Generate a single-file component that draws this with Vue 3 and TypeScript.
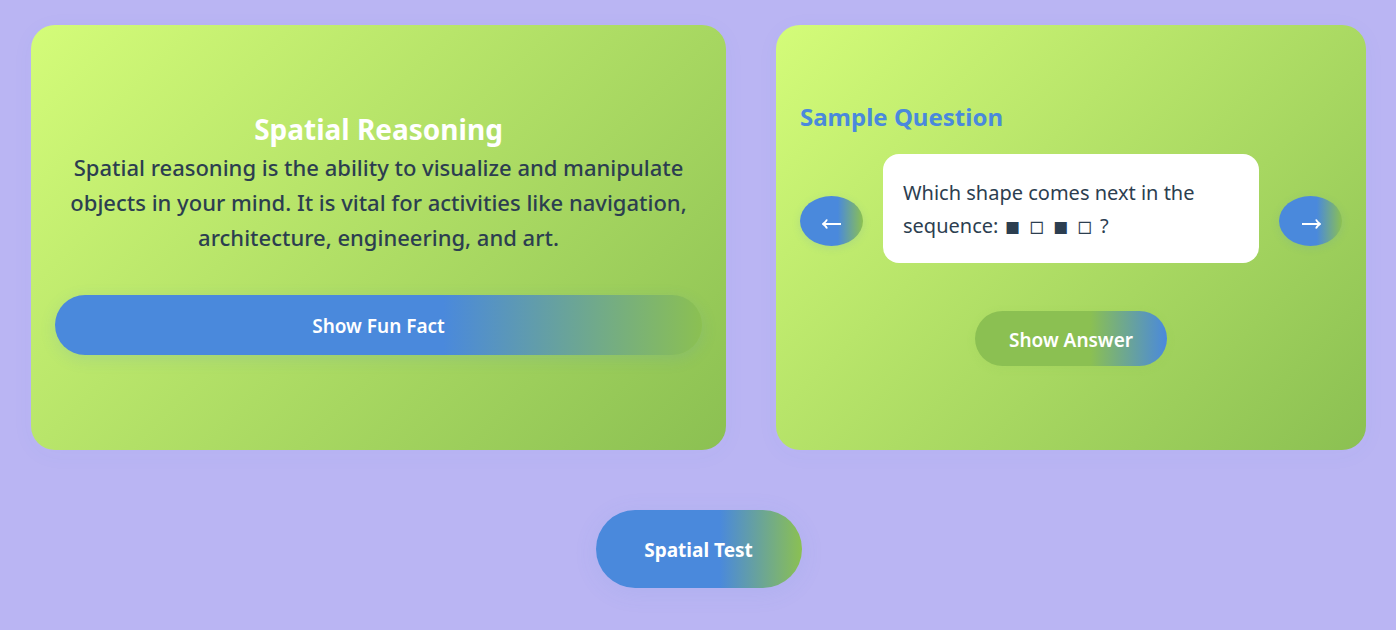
<script setup lang="ts">
import { computed, ref } from 'vue'

const questions = [
  { text: 'Which shape comes next in the sequence:', shapes: '■ □ ■ □', answer: '■' },
]
const index = ref(0)
const showFact = ref(false)
const showAnswer = ref(false)
const current = computed(() => questions[index.value])

function move(step: number) {
  index.value = (index.value + step + questions.length) % questions.length
  showAnswer.value = false
}
</script>

<template>
  <main class="page">
    <div class="cards">
      <section class="card intro">
        <h1>Spatial Reasoning</h1>
        <p class="lead">
          Spatial reasoning is the ability to visualize and manipulate objects in your mind. It is
          vital for activities like navigation, architecture, engineering, and art.
        </p>
        <button class="btn fact" type="button" @click="showFact = !showFact">Show Fun Fact</button>
      </section>
      <section class="card sample">
        <h2>Sample Question</h2>
        <div class="carousel">
          <button class="btn arrow" type="button" aria-label="Previous question" @click="move(-1)">
            <svg viewBox="0 0 20 12" aria-hidden="true"><path d="M19 6H1.500M5 1.500Q4 4 1 6Q4 8 5 10.500" /></svg>
          </button>
          <p class="question">
            {{ current.text }} <span class="shapes">{{ current.shapes }}</span> ?
          </p>
          <button class="btn arrow" type="button" aria-label="Next question" @click="move(1)">
            <svg viewBox="0 0 20 12" aria-hidden="true"><path d="M1 6h17.500M15 1.500Q16 4 19 6Q16 8 15 10.500" /></svg>
          </button>
        </div>
        <button class="btn answer" type="button" @click="showAnswer = !showAnswer">
          Show Answer
        </button>
      </section>
    </div>
    <button class="btn test" type="button">Spatial Test</button>
  </main>
</template>

<style>
body {
  margin: 0;
  background: #bab5f3;
}
</style>

<style scoped>
.page {
  box-sizing: border-box;
  display: flex;
  flex-direction: column;
  align-items: center;
  gap: 60px;
  padding: 25px 30px 42px 31px;
  font-family: 'Noto Sans', 'Open Sans', 'DejaVu Sans', sans-serif;
  color: #2c3e50;
}
.cards {
  display: grid;
  grid-template-columns: 695fr 590fr;
  gap: 50px;
  width: 100%;
}
.card {
  box-sizing: border-box;
  display: flex;
  flex-direction: column;
  justify-content: center;
  min-height: 425px;
  padding: 24px;
  border-radius: 24px;
  background: linear-gradient(135deg, #d4fc79 0%, #8bc052 100%);
  box-shadow: 0 4px 24px rgba(74, 137, 220, 0.04);
}
.intro {
  text-align: center;
}
h1 {
  margin: 0 0 2px;
  font-size: 28px;
  line-height: 38px;
  font-weight: 700;
  color: #fff;
}
.lead {
  margin: 0 0 40px;
  font-size: 22px;
  line-height: 35px;
  font-weight: 500;
}
.btn {
  border: 0;
  padding: 2px 0 0;
  font-family: inherit;
  color: #fff;
  cursor: pointer;
  background: linear-gradient(90deg, #4a89dc 60%, #8bc052 100%);
  box-shadow: 0 4px 16px rgba(74, 137, 220, 0.15);
}
.fact {
  height: 60px;
  margin-bottom: 10px;
  border-radius: 30px;
  font-size: 19px;
  font-weight: 600;
}
h2 {
  margin: 0 0 20px;
  font-size: 24px;
  line-height: 34px;
  font-weight: 700;
  color: #4a89dc;
}
.carousel {
  display: flex;
  align-items: center;
  gap: 20px;
  margin-bottom: 48px;
}
.arrow {
  display: grid;
  place-items: center;
  flex: none;
  width: 63px;
  height: 50px;
  margin-top: 25px;
  padding-top: 6px;
  border-radius: 50%;
  box-shadow: 0 2px 8px rgba(74, 137, 220, 0.15);
}
.arrow svg {
  width: 20px;
  height: 12px;
  fill: none;
  stroke: currentColor;
  stroke-width: 1.9;
}
.question {
  flex: 1;
  margin: 0;
  padding: 22px 20px 21px;
  border-radius: 16px;
  background: #fff;
  font-size: 20px;
  line-height: 33px;
}
.shapes {
  margin: 0 4px 0 3px;
  font-family: 'DejaVu Sans Mono', monospace;
  font-size: 20px;
  line-height: 1;
}
.answer {
  align-self: center;
  width: 192px;
  height: 55px;
  margin-bottom: 9px;
  border-radius: 28px;
  font-size: 19px;
  font-weight: 600;
  background: linear-gradient(90deg, #8bc052 60%, #4a89dc 100%);
  box-shadow: 0 2px 8px rgba(139, 192, 82, 0.15);
}
.test {
  width: 206px;
  height: 78px;
  border-radius: 39px;
  font-size: 19px;
  font-weight: 700;
  box-shadow: 0 4px 24px rgba(74, 137, 220, 0.1);
}
</style>
